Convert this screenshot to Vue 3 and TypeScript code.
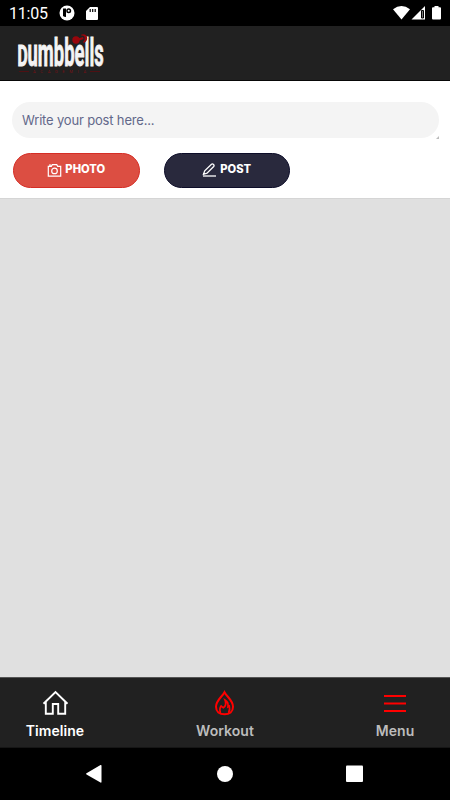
<script setup lang="ts">
import { ref } from 'vue'

const post = ref<string>('')
const tabs: { id: string; label: string }[] = [
  { id: 'timeline', label: 'Timeline' },
  { id: 'workout', label: 'Workout' },
  { id: 'menu', label: 'Menu' },
]
const active = ref<string>('timeline')
</script>

<template>
  <div class="screen">
    <div class="status">
      <span class="time">11:05</span>
      <svg class="app-dot" viewBox="0 0 16 16" width="16" height="16">
        <circle cx="8" cy="8" r="7.500" fill="#fff" />
        <path d="M4 3.500h3V12q-2 0-3-1z" fill="#000" />
        <circle cx="9.700" cy="5.800" r="2.500" fill="#000" />
        <circle cx="9.700" cy="5.800" r="1" fill="#fff" />
      </svg>
      <svg class="sd" viewBox="0 0 12 13" width="12" height="13">
        <path d="M4 0h7q1 0 1 1v11q0 1-1 1H1q-1 0-1-1V4z" fill="#fff" />
        <path d="M4.200 2v3M6.700 2v3M9.200 2v3" stroke="#000" stroke-width="1.200" />
      </svg>
      <svg class="signals" viewBox="0 0 50 16" width="50" height="16">
        <path d="M0 4.200Q8.500-2 17 4.200L8.500 14.500z" fill="#fff" />
        <path d="M32 1v13.500H18.500z" fill="#fff" />
        <path d="M28.500 5.500h2v7.500h-2z" fill="#777" stroke="#000" stroke-width="1" />
        <path d="M41.500 1h4v1.300h1.500q1 0 1 1V13.500q0 1-1 1h-7q-1 0-1-1V3.300q0-1 1-1h1.500z" fill="#fff" />
      </svg>
    </div>

    <header class="header">
      <svg class="logo" viewBox="0 0 92 46" width="92" height="46">
        <text class="brand initial" transform="translate(3.400 33) scale(.68 1.280)" font-size="23">D</text>
        <text class="brand" transform="translate(13.500 33) scale(.79 1.680)" textLength="96.500" lengthAdjust="spacingAndGlyphs" font-size="23">umbbells</text>
        <g fill="#98060c">
          <circle cx="62" cy="7" r="3.700" />
          <path d="M64 5.500l5-1.500.7 2-5 1.700z" />
          <path d="M67.500 1.500q4.500-1 5.500 2.500t-3 6l-1-1q2.300-2 1.800-4.500T67 2.500z" />
        </g>
        <path d="M5 38.500h10M76 38.500h10" stroke="#4f1013" />
        <text class="subtitle" x="19" y="40" textLength="53" font-size="4">ACADEMIA</text>
      </svg>
    </header>

    <main class="composer">
      <div class="field">
        <input v-model="post" placeholder="Write your post here..." aria-label="Post" />
        <svg class="grip" width="3" height="3" viewBox="0 0 3 3"><path d="M3 0v3H0z" fill="#bbb" /></svg>
      </div>
      <div class="actions">
        <button class="pill photo" type="button">
          <svg width="15" height="15" viewBox="0 0 15 15" fill="none" stroke="currentColor" stroke-width="1.200">
            <path d="M1.300 3.300h3l1-1.700h4.400l1 1.700h3v9.800H1.300z" />
            <circle cx="7.500" cy="7.900" r="2.800" />
            <path d="M2 2.200h2" />
          </svg>
          <span>PHOTO</span>
        </button>
        <button class="pill send" type="button">
          <svg width="15" height="15" viewBox="0 0 15 15" fill="none" stroke="currentColor" stroke-width="1.300">
            <path d="M1.500 11.300l1.200-3.500L9.500 1.300q1-.8 2 .2t.2 2L5 10.200z" />
            <path d="M1 13h13" />
          </svg>
          <span>POST</span>
        </button>
      </div>
    </main>

    <section class="feed"></section>

    <nav class="tabs">
      <button v-for="tab in tabs" :key="tab.id" type="button" class="tab" :class="{ active: active === tab.id }" @click="active = tab.id">
        <svg v-if="tab.id === 'timeline'" width="28" height="28" viewBox="0 0 28 28" fill="none" stroke="#fff" stroke-width="1.900">
          <path d="M2.500 14.700L14.500 3l12 11.700M4.800 12.700v12h7V15h5.400v9.700h7v-12" />
        </svg>
        <svg v-else-if="tab.id === 'workout'" width="28" height="28" viewBox="0 0 28 28" fill="none" stroke="red" stroke-width="2">
          <path d="M13.500 3.200C11 8 5 11.500 5 17.700c0 5 3.500 7.600 8.500 7.600s8.500-2.600 8.500-7.600C22 11.500 16 8 13.500 3.200z" />
          <path d="M9.500 24c-1-3-.6-5.500.6-7l2.200 1.800c2.300-1.500 3-4.500 1.700-7.800 2.800 1.600 3.400 4.200 3 6.800l1.300-.8c.7 2.500.2 5-.8 7" stroke-width="1.700" />
        </svg>
        <svg v-else width="28" height="28" viewBox="0 0 28 28" stroke="red" stroke-width="2">
          <path d="M3 7h22M3 14.500h22M3 22h22" />
        </svg>
        <span class="label">{{ tab.label }}</span>
      </button>
    </nav>

    <div class="system-nav">
      <svg width="450" height="52" viewBox="0 0 450 52" fill="#fff">
        <path d="M86.500 25.200L100.500 17q1-.4 1 .8v16q0 1.200-1 .8l-14-8.200q-1-.6 0-1.200z" />
        <circle cx="225" cy="26" r="8" />
        <rect x="346" y="17.500" width="17" height="16.500" rx="1" />
      </svg>
    </div>
  </div>
</template>

<style>
body { margin: 0; }
</style>

<style scoped>
.screen { width: 450px; height: 800px; display: flex; flex-direction: column; overflow: hidden; background: #e0e0e0; font-family: Inter, Roboto, sans-serif; }
.status { height: 26px; flex: none; box-sizing: border-box; background: #000; display: flex; align-items: center; padding: 0 7px 0 9px; color: #fff; }
.time { width: 50px; font: 400 16px/24px Roboto, sans-serif; letter-spacing: -.2px; padding-top: 1px; }
.sd { margin-left: 11px; }
.signals { margin-left: auto; }
.header { height: 55px; flex: none; box-sizing: border-box; background: #212121; border-bottom: 1px solid #080808; padding: 7px 14px 0; }
.logo { display: block; overflow: visible; }
.brand { font-family: Roboto, sans-serif; font-weight: 700; fill: #f4f4f4; stroke: #f4f4f4; stroke-width: .5px; }
.initial { stroke-width: .9px; }
.subtitle { font-family: Roboto, sans-serif; fill: #7a1015; }
.composer { height: 118px; flex: none; box-sizing: border-box; background: #fff; border-bottom: 1px solid #d5d5d5; padding: 21px 12px 0; }
.field { position: relative; width: 427px; height: 36px; }
.field input { display: block; box-sizing: border-box; width: 100%; height: 36px; padding: 0 10px; border: 0; border-radius: 18px; outline: 0; background: #f4f4f4; font: 400 13px Inter, Roboto, sans-serif; letter-spacing: -.17px; color: #515878; }
.field input::placeholder { color: #62688a; opacity: 1; }
.grip { position: absolute; right: 0; bottom: -1px; }
.actions { display: flex; gap: 24px; padding: 15px 1px 0; }
.pill { display: flex; align-items: center; justify-content: center; gap: 3px; width: 126.500px; height: 35px; box-sizing: border-box; padding: 0 0 3px; border-radius: 18px; border: 1px solid; color: #fff; font: 800 11.200px Inter, Roboto, sans-serif; }
.pill svg { margin-top: 2px; }
.photo { background: #dc4e42; border-color: #d52d25; }
.send { background: #29293d; border-color: #0d0d29; }
.feed { flex: 1; background: #e0e0e0; }
.tabs { height: 71px; flex: none; box-sizing: border-box; background: #212121; border-top: 1px solid #555; border-bottom: 1px solid #161616; display: flex; justify-content: space-between; padding: 0 25px; }
.tab { display: flex; flex-direction: column; align-items: center; width: 60px; padding: 11px 0 0; border: 0; background: none; color: #bcbcbc; }
.tab svg { flex: none; }
.label { font: 600 14px/20px Inter, Roboto, sans-serif; letter-spacing: .06px; margin-top: 4px; }
.active .label { color: #fff; }
.system-nav { height: 52px; flex: none; background: #000; }
.system-nav svg { display: block; }
</style>
